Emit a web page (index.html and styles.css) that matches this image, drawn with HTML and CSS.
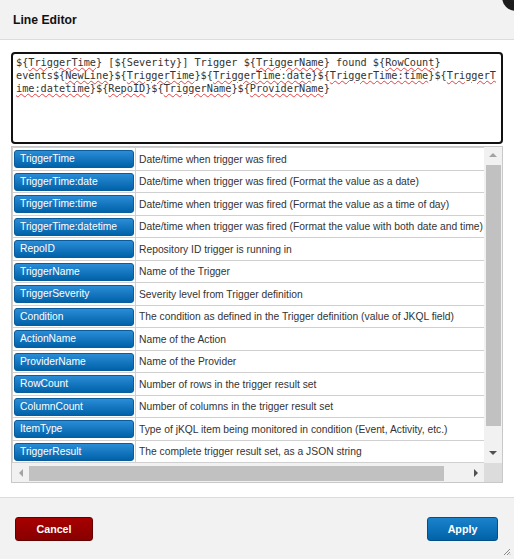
FILE: index.html
```html
<!DOCTYPE html>
<html lang="en">
<head>
  <meta charset="UTF-8">
  <title>Line Editor</title>
  <link rel="stylesheet" href="styles.css">
</head>
<body>
  <div class="dialog">
    <span class="close-btn">&times;</span>
    <header class="dialog-header">
      <h1>Line Editor</h1>
    </header>
    <main class="dialog-body">
      <div class="editor">${<span class="bad">TriggerTime</span>} [${Severity}] Trigger ${<span class="bad">TriggerName</span>} found ${<span class="bad">RowCount</span>} events${<span class="bad">NewLine</span>}${<span class="bad">TriggerTime</span>}${<span class="bad">TriggerTime:date</span>}${<span class="bad">TriggerTime:time</span>}${<span class="bad">TriggerTime:datetime</span>}${<span class="bad">RepoID</span>}${<span class="bad">TriggerName</span>}${<span class="bad">ProviderName</span>}</div>

      <div class="vars">
        <div class="vars-view">
          <table id="varTable"></table>
        </div>
        <div class="vscroll">
          <span class="arrow arrow-up"></span>
          <span class="vthumb"></span>
          <span class="arrow arrow-down"></span>
        </div>
        <div class="hscroll">
          <span class="arrow arrow-left"></span>
          <span class="hthumb"></span>
          <span class="arrow arrow-right"></span>
        </div>
        <div class="corner"></div>
      </div>
    </main>
    <footer class="dialog-footer">
      <button class="btn btn-cancel">Cancel</button>
      <button class="btn btn-apply">Apply</button>
      <svg class="grip" width="8" height="8" viewBox="0 0 8 8">
        <path d="M7 1L1 7M7 4L4 7M7 6.5L6.5 7" stroke="#8a8a8a" stroke-width="1" fill="none"/>
      </svg>
    </footer>
  </div>

  <script>
    // variables offered in the editor
    const variables = [
      ["TriggerTime", "Date/time when trigger was fired"],
      ["TriggerTime:date", "Date/time when trigger was fired (Format the value as a date)"],
      ["TriggerTime:time", "Date/time when trigger was fired (Format the value as a time of day)"],
      ["TriggerTime:datetime", "Date/time when trigger was fired (Format the value with both date and time)"],
      ["RepoID", "Repository ID trigger is running in"],
      ["TriggerName", "Name of the Trigger"],
      ["TriggerSeverity", "Severity level from Trigger definition"],
      ["Condition", "The condition as defined in the Trigger definition (value of JKQL field)"],
      ["ActionName", "Name of the Action"],
      ["ProviderName", "Name of the Provider"],
      ["RowCount", "Number of rows in the trigger result set"],
      ["ColumnCount", "Number of columns in the trigger result set"],
      ["ItemType", "Type of jKQL item being monitored in condition (Event, Activity, etc.)"],
      ["TriggerResult", "The complete trigger result set, as a JSON string"],
      ["NewLine", "Inserts a line break"]
    ];

    const table = document.getElementById("varTable");
    variables.forEach(v => {
      const tr = document.createElement("tr");
      const name = document.createElement("td");
      name.className = "name";
      const btn = document.createElement("span");
      btn.className = "var-btn";
      btn.textContent = v[0];
      name.appendChild(btn);
      const desc = document.createElement("td");
      desc.className = "desc";
      desc.textContent = v[1];
      tr.appendChild(name);
      tr.appendChild(desc);
      table.appendChild(tr);
    });
  </script>
</body>
</html>
```

FILE: styles.css
```css
body {
  margin: 0;
  font-family: "Liberation Sans", Arial, sans-serif;
  background: #fff;
  overflow: hidden;
}
.dialog {
  position: relative;
  width: 514px;
  height: 559px;
  display: flex;
  flex-direction: column;
}
.close-btn {
  position: absolute;
  top: -17px;
  right: -16px;
  width: 28px;
  height: 28px;
  border-radius: 50%;
  background: #1c1c1c;
  color: #fff;
  font-size: 16px;
  line-height: 28px;
  text-align: center;
}
.dialog-header {
  height: 39px;
  background: #f2f2f2;
  border-bottom: 1px solid #dcdcdc;
  display: flex;
  align-items: center;
  padding-left: 13px;
}
.dialog-header h1 {
  margin: 0;
  font-size: 12.2px;
  font-weight: bold;
  color: #111;
}
.dialog-body {
  flex: 1;
  padding: 12px 11px 0 11px;
}
.editor {
  box-sizing: border-box;
  width: 492px;
  height: 92px;
  border: 2px solid #111;
  border-radius: 4px;
  padding: 2px 3px;
  font: 10.23px/13px "DejaVu Sans Mono", monospace;
  color: #333;
  white-space: pre-wrap;
  overflow-wrap: break-word;
}
.bad {
  text-decoration: underline wavy #e84040;
  text-decoration-thickness: 1px;
  text-underline-offset: 1px;
}
.vars {
  margin-top: 2px;
  box-sizing: border-box;
  width: 492px;
  height: 337px;
  border: 1px solid #c8c8c8;
  display: grid;
  grid-template-columns: 1fr 18px;
  grid-template-rows: 1fr 19px;
}
.vars-view {
  overflow: hidden;
}
.vars-view table {
  border-collapse: collapse;
  white-space: nowrap;
}
.vars-view td {
  border: 1px solid #d0d0d0;
  padding: 2px 1px 1.5px 1px;
  font-size: 10.3px;
  color: #333;
}
.vars-view td.desc {
  padding-left: 3px;
  padding-right: 4px;
}
.var-btn {
  display: block;
  box-sizing: border-box;
  width: 120px;
  height: 18px;
  line-height: 16px;
  padding-left: 5px;
  border: 1px solid #0b5c9a;
  border-radius: 3px;
  background: linear-gradient(#2b8cd7, #0062a8);
  color: #fff;
  font-size: 10.3px;
}
.vscroll {
  background: #f1f1f1;
  display: flex;
  flex-direction: column;
  align-items: center;
}
.hscroll {
  background: #f1f1f1;
  display: flex;
  align-items: center;
}
.corner {
  background: #dcdcdc;
}
.arrow {
  width: 0;
  height: 0;
  border: 4px solid transparent;
}
.vscroll .arrow {
  margin: 6px 0;
}
.arrow-up {
  border-bottom-color: #a3a3a3;
  border-top-width: 0;
}
.arrow-down {
  border-top-color: #505050;
  border-bottom-width: 0;
  margin-top: auto !important;
  margin-bottom: 8px !important;
}
.hscroll .arrow {
  margin: 0 6px 0 7px;
}
.arrow-left {
  border-right-color: #a3a3a3;
  border-left-width: 0;
}
.arrow-right {
  border-left-color: #505050;
  border-right-width: 0;
  margin-left: auto !important;
}
.vthumb {
  width: 15px;
  height: 261px;
  margin-top: 2px;
  background: #c1c1c1;
}
.hthumb {
  width: 415px;
  height: 15px;
  margin-top: 1px;
  background: #c1c1c1;
}
.dialog-footer {
  position: relative;
  height: 61px;
  box-sizing: content-box;
  background: #f2f2f2;
  border-top: 1px solid #dcdcdc;
  display: flex;
  justify-content: space-between;
  align-items: flex-start;
  padding: 0 16px 0 15px;
}
.btn {
  margin-top: 19px;
  height: 24px;
  border-radius: 3px;
  font-family: "Liberation Sans", Arial, sans-serif;
  font-size: 10.7px;
  font-weight: bold;
  color: #fff;
  padding: 0;
}
.btn-cancel {
  width: 78px;
  background: linear-gradient(#a80000, #880000);
  border: 1px solid #650000;
}
.btn-apply {
  width: 71px;
  background: linear-gradient(#1a82cc, #0063a8);
  border: 1px solid #054f88;
}
.grip {
  position: absolute;
  right: 3px;
  bottom: 3px;
}
```
